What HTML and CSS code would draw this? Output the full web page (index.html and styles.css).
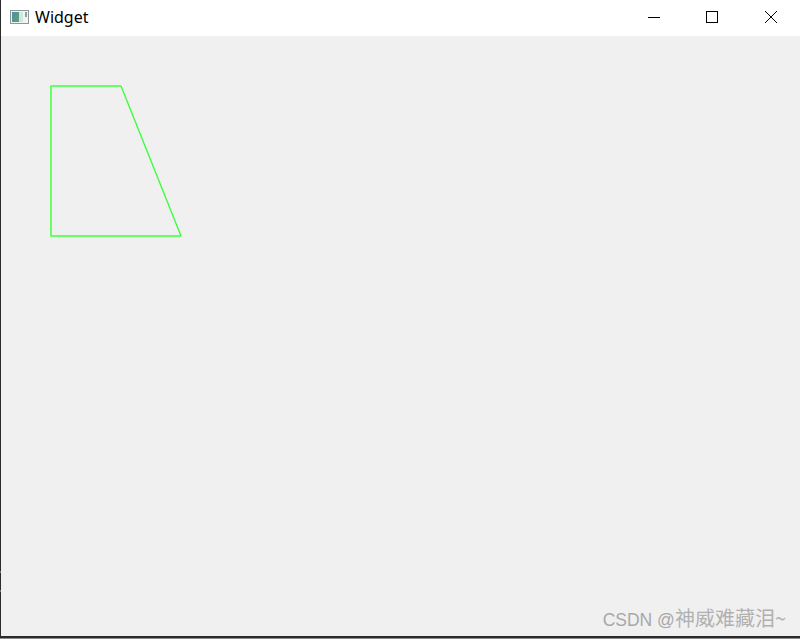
FILE: index.html
```html
<!DOCTYPE html>
<html lang="zh">
<head>
<meta charset="utf-8">
<title>Widget</title>
<link rel="stylesheet" href="styles.css">
</head>
<body>
<div class="window">
  <header class="titlebar">
    <div class="title-left">
      <svg class="app-icon" width="20" height="16" viewBox="0 0 20 16">
        <defs>
          <linearGradient id="pane" x1="0" y1="0" x2="1" y2="1">
            <stop offset="0" stop-color="#4f8fa6"/>
            <stop offset="1" stop-color="#5f9f78"/>
          </linearGradient>
        </defs>
        <rect x="0.5" y="1.5" width="18" height="13" fill="#f2f4f2" stroke="#8f9698"/>
        <rect x="2" y="3" width="7" height="10" fill="url(#pane)"/>
        <rect x="9" y="3" width="4" height="10" fill="#d3e6da"/>
        <rect x="15" y="3" width="2" height="5" fill="#7fa8a0"/>
      </svg>
      <span class="title-text">Widget</span>
    </div>
    <div class="controls">
      <div class="control">
        <svg width="14" height="14" viewBox="0 0 14 14"><path d="M1 7.5H13" class="glyph"/></svg>
      </div>
      <div class="control">
        <svg width="14" height="14" viewBox="0 0 14 14"><rect x="1.5" y="1.5" width="11" height="11" class="glyph"/></svg>
      </div>
      <div class="control">
        <svg width="14" height="14" viewBox="0 0 14 14"><path d="M1 1L13 13M13 1L1 13" class="glyph"/></svg>
      </div>
    </div>
  </header>
  <main class="client">
    <svg class="shape" width="140" height="160" viewBox="0 0 140 160">
      <path d="M71 1H1V151H131" class="edge"/>
      <path d="M71 1L131 151" class="slant"/>
    </svg>
    <div class="watermark"><span class="wm-latin">CSDN @</span>神威难藏泪~</div>
  </main>
  <span class="notch notch-a"></span>
  <span class="notch notch-b"></span>
</div>
</body>
</html>
```
FILE: styles.css
```css
html, body {
  margin: 0;
  padding: 0;
  height: 100%;
}
body {
  background: #2b2b2b;
  overflow: hidden;
}
.window {
  position: relative;
  box-sizing: border-box;
  width: 800px;
  height: 639px;
  display: flex;
  flex-direction: column;
  padding: 0 0 2px 1px;
  background: #2b2b2b;
  border-bottom: 1px solid #8c8c8c;
}
.titlebar {
  height: 36px;
  flex: none;
  display: flex;
  align-items: center;
  justify-content: space-between;
  background: #fff;
}
.title-left {
  display: flex;
  align-items: center;
  gap: 5px;
  padding-left: 9px;
  height: 34px;
  margin-bottom: 2px;
}
.app-icon {
  display: block;
}
.title-text {
  font-family: "Noto Sans", sans-serif;
  font-size: 16px;
  line-height: 20px;
  color: #000;
}
.controls {
  display: flex;
}
.control {
  width: 58.5px;
  height: 34px;
  margin-bottom: 2px;
  display: flex;
  align-items: center;
  justify-content: center;
}
.glyph {
  fill: none;
  stroke: #000;
  stroke-width: 1;
}
.client {
  position: relative;
  flex: 1;
  background: #f0f0f0;
  padding: 49px 0 0 49px;
}
.shape {
  display: block;
}
.edge {
  fill: none;
  stroke: #66ff66;
  stroke-width: 2;
  stroke-linejoin: round;
}
.slant {
  fill: none;
  stroke: #33ff33;
  stroke-width: 1.3;
}
.watermark {
  position: absolute;
  right: 14px;
  bottom: 3px;
  font-size: 20px;
  line-height: 26px;
  color: #b0b0b0;
  font-family: "Noto Sans CJK SC", sans-serif;
  white-space: nowrap;
}
.wm-latin {
  font-family: "Liberation Sans", sans-serif;
  font-size: 17.5px;
  color: #a8a8a8;
}
.notch {
  position: absolute;
  left: 0;
  width: 1px;
  height: 2px;
  background: #77775f;
}
.notch-a {
  top: 571px;
}
.notch-b {
  top: 590px;
}
```
